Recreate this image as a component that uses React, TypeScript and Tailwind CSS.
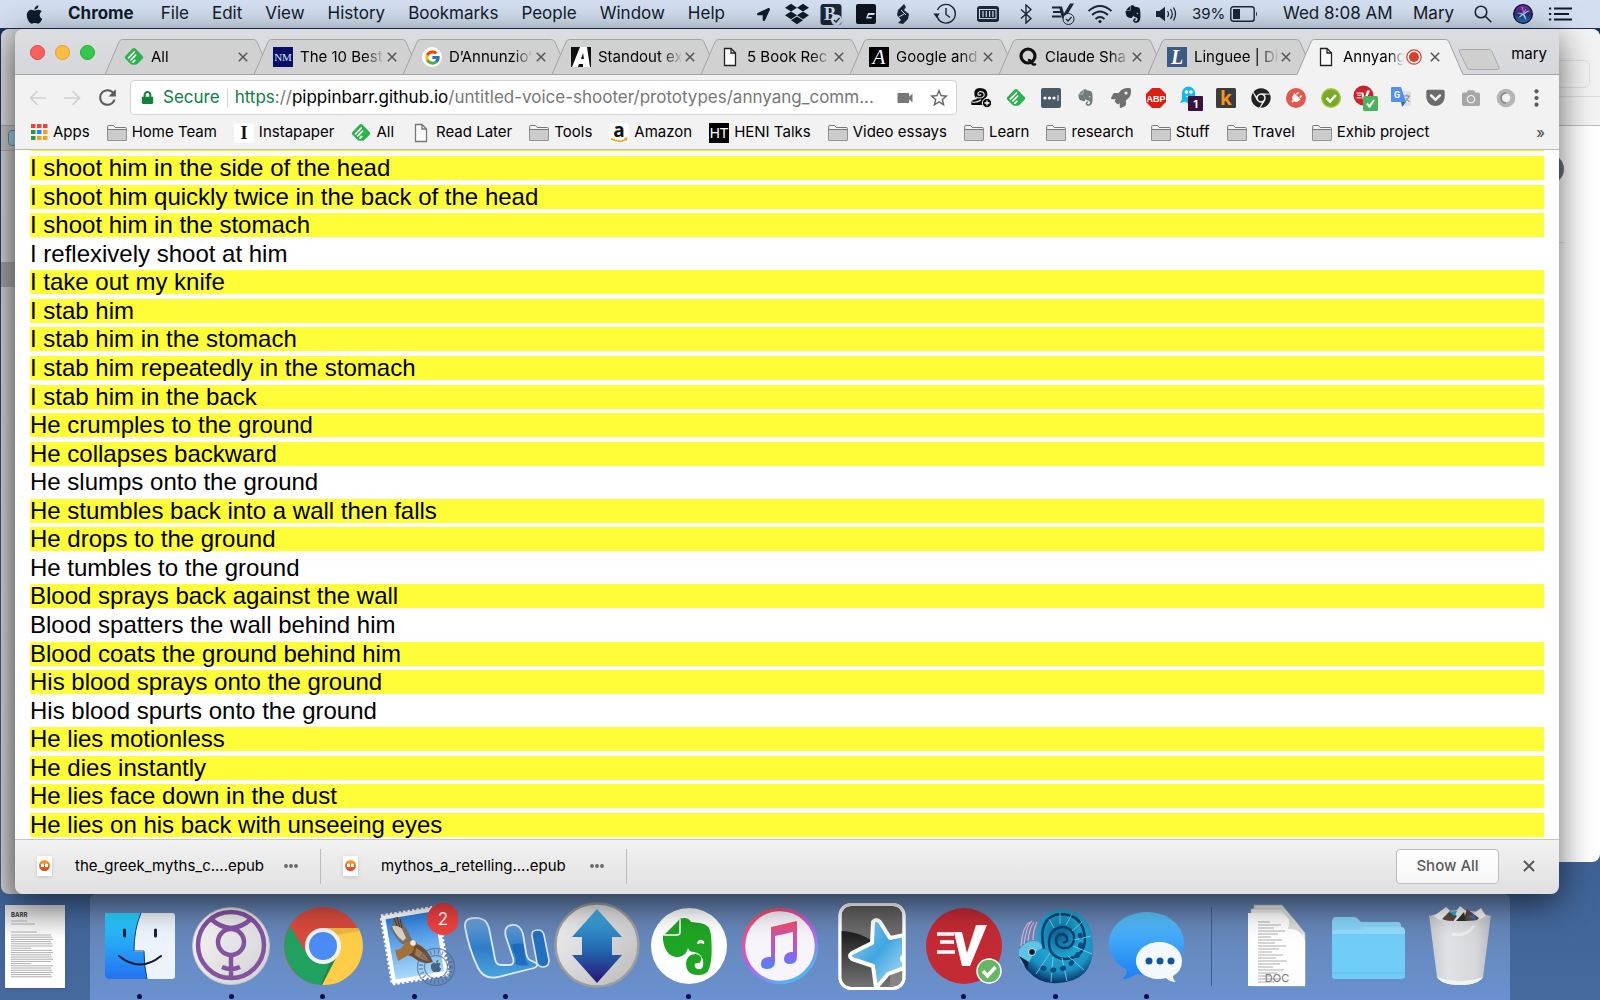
import React from "react";
import {
  FaApple,
  FaCamera,
  FaChrome,
  FaDropbox,
  FaEvernote,
  FaGetPocket,
  FaLocationArrow,
  FaLock,
  FaPlug,
  FaRocket,
} from "react-icons/fa";
import { FcGoogle } from "react-icons/fc";
import { MdVideocam, MdRefresh, MdStarBorder } from "react-icons/md";

/* ---------- small shared icons ---------- */

function Feedly({ size = 20 }: { size?: number }) {
  return (
    <svg width={size} height={size} viewBox="0 0 20 20">
      <path d="M8.6 1.6a2 2 0 0 1 2.8 0l7.2 7.3a2 2 0 0 1 0 2.8L13.4 17a2.500 2.500 0 0 1-1.800.8H8.400a2.500 2.500 0 0 1-1.800-.8L1.400 11.700a2 2 0 0 1 0-2.800z" fill="#2bb24c" />
      <path d="M4.500 10.800l5.800-5.800M6.800 13l4.800-4.800M9 15.200l1.800-1.800" stroke="#fff" strokeWidth="1.700" strokeLinecap="round" fill="none" />
    </svg>
  );
}

function PageIcon({ stroke = "#222" }: { stroke?: string }) {
  return (
    <svg width="20" height="20" viewBox="0 0 20 20">
      <path d="M4.500 1.500h6.500l4.500 4.500v12.500h-11z" fill="#fafafa" stroke={stroke} strokeWidth="1.300" />
      <path d="M11 1.500v4.500h4.500" fill="none" stroke={stroke} strokeWidth="1.300" />
    </svg>
  );
}

function FolderIcon() {
  return (
    <svg width="20" height="18" viewBox="0 0 20 18">
      <path d="M.7 16.300V2.200q0-.7.7-.7h5.200l1.600 2h10.400q.7 0 .7.7v12.100z" fill="#f4f4f4" stroke="#77777a" strokeWidth="1" />
      <path d="M1.200 5.700h17.600v10.100H1.200z" fill="#cbcbcc" />
      <path d="M.7 5.500h18.600" stroke="#77777a" strokeWidth="1" />
    </svg>
  );
}

function AppsIcon() {
  const colors = ["#e8453c", "#e8453c", "#e8453c", "#2a9a4a", "#1e88f7", "#f9a01b", "#2a9a4a", "#f9a01b", "#f9a01b"];
  return (
    <svg width="17" height="17" viewBox="0 0 17 17">
      {colors.map((c, i) => (
        <rect key={i} x={(i % 3) * 6} y={Math.floor(i / 3) * 6} width="4.500" height="4" fill={c} />
      ))}
    </svg>
  );
}

function LetterIcon({ text, bg, fg, size, font = "Liberation Serif", weight = "400", style = "normal" }: { text: string; bg: string; fg: string; size: number; font?: string; weight?: string; style?: string }) {
  return (
    <svg width="20" height="20" viewBox="0 0 20 20">
      <rect width="20" height="20" rx={bg === "#ffffff" ? 2 : 0} fill={bg} />
      <text x="10" y={10 + size * 0.34} textAnchor="middle" fontSize={size} fontFamily={font} fontWeight={weight} fontStyle={style} fill={fg}>{text}</text>
    </svg>
  );
}

function AmazonIcon() {
  return (
    <svg width="20" height="20" viewBox="0 0 20 20">
      <rect width="20" height="20" rx="2" fill="#fff" />
      <text x="10" y="14" textAnchor="middle" fontSize="19" fontWeight="700" fontFamily="Open Sans" fill="#111">a</text>
      <path d="M2 15.500q8 5 15 .8" fill="none" stroke="#f79a1c" strokeWidth="1.500" />
      <path d="M15 15.300l3-.2-.8 2.700" fill="none" stroke="#f79a1c" strokeWidth="1.100" />
    </svg>
  );
}

function CloseIcon({ size = 10, width = 1.5 }: { size?: number; width?: number }) {
  return (
    <svg width={size} height={size} viewBox="0 0 10 10">
      <path d="M.8.8l8.400 8.400M9.200.8L.8 9.200" stroke="#555" strokeWidth={width} />
    </svg>
  );
}

function ExpressV({ color = "#fff" }: { color?: string }) {
  return (
    <g fill="none" stroke={color}>
      <path d="M13 26h17M16 34h14M13 44h18" strokeWidth="3.500" />
      <path d="M30 24h8l5 21 9-28h11L46 58h-8z" fill={color} stroke="none" />
    </g>
  );
}

/* ---------- menu bar ---------- */

const statusIcons: { name: string; width: string; icon: React.ReactNode }[] = [
  { name: "Location", width: "w-[34px]", icon: <FaLocationArrow size={13} /> },
  { name: "Dropbox", width: "w-[34px]", icon: <FaDropbox size={24} /> },
  {
    name: "Backup", width: "w-[34px]", icon: (
      <svg width="23" height="23" viewBox="0 0 23 23">
        <rect x=".5" y="1" width="21" height="21" rx="3" fill="#1c2738" />
        <text x="10" y="17" textAnchor="middle" fontSize="18" fontWeight="700" fontFamily="Liberation Serif" fill="#d3dff0">B</text>
        <circle cx="16.500" cy="17" r="5.500" fill="#d3dff0" />
        <path d="M14 17l2 2 3.500-4" fill="none" stroke="#1c2738" strokeWidth="1.300" />
      </svg>
    ),
  },
  {
    name: "Monitor", width: "w-[36px]", icon: (
      <svg width="20" height="20" viewBox="0 0 20 20">
        <rect width="20" height="20" rx="2" fill="#0d1420" />
        <path d="M2 14.500h8l2-5.500h7l-1 2h-5l-1 2h4l-.6 1.500z" fill="#dfe8f4" />
      </svg>
    ),
  },
  {
    name: "Scrivener", width: "w-[38px]", icon: (
      <svg width="16" height="22" viewBox="0 0 16 22">
        <path d="M9 1l2 3-2 3 5 4-1 5-5 5-5-1 3-3-4-5 1-5z" fill="#1c2738" />
        <path d="M6 7l5 5M4 14l5-3" stroke="#d3dff0" strokeWidth="1" />
      </svg>
    ),
  },
  {
    name: "Time Machine", width: "w-[46px]", icon: (
      <svg width="24" height="22" viewBox="0 0 24 22" fill="none" stroke="#1c2738" strokeWidth="1.400">
        <path d="M4 13A9.300 9.300 0 1 0 4.500 7" />
        <path d="M13 5v6.500l4 3" />
        <path d="M.3 10.500h6.400l-3 4.500z" fill="#1c2738" stroke="none" />
      </svg>
    ),
  },
  {
    name: "Memory", width: "w-[40px]", icon: (
      <svg width="24" height="18" viewBox="0 0 24 18">
        <rect x="1" y="1" width="22" height="16" rx="3" fill="#1c2738" />
        <path d="M3.500 4.500h16.500v9H3.500z" fill="none" stroke="#d3dff0" strokeWidth="1.100" />
        <path d="M7 6v6M10.300 6v6M13.600 6v6M16.900 6v6" stroke="#d3dff0" strokeWidth="1.200" />
      </svg>
    ),
  },
  {
    name: "Bluetooth", width: "w-[36px]", icon: (
      <svg width="14" height="20" viewBox="0 0 14 20" fill="none" stroke="#1c2738" strokeWidth="1.400">
        <path d="M2 5.500l10 9-5 4.500V1l5 4.500-10 9" />
      </svg>
    ),
  },
  {
    name: "VPN", width: "w-[38px]", icon: (
      <svg width="25" height="24" viewBox="0 0 25 24">
        <path d="M1 5.500h8M2 10h8M1 14.500h9" stroke="#1c2738" strokeWidth="2.200" />
        <path d="M8 4.500h3l2 7 6-10h4l-9 15h-3z" fill="#1c2738" />
        <circle cx="17.500" cy="17" r="5.500" fill="#d3dff0" stroke="#1c2738" />
        <path d="M15 17l2 2 3.500-4" fill="none" stroke="#1c2738" strokeWidth="1.200" />
      </svg>
    ),
  },
  {
    name: "Wi-Fi", width: "w-[36px]", icon: (
      <svg width="26" height="20" viewBox="0 0 26 20" fill="none" stroke="#1c2738" strokeWidth="1.700">
        <path d="M1.500 7q11.500-10 23 0M5 11q8-7 16 0M8.500 15q4.500-4 9 0" />
        <circle cx="13" cy="17.500" r="1.600" fill="#1c2738" stroke="none" />
      </svg>
    ),
  },
  { name: "Evernote", width: "w-[30px]", icon: <FaEvernote size={20} /> },
  {
    name: "Volume", width: "w-[36px]", icon: (
      <svg width="22" height="16" viewBox="0 0 22 16">
        <path d="M1 5h3.500L10 .8v14.400L4.500 11H1z" fill="#1c2738" />
        <path d="M12.500 5q2 3 0 6M15.500 3q3.500 5 0 10M18.500 1.500q4 6.500 0 13" fill="none" stroke="#1c2738" strokeWidth="1.300" />
      </svg>
    ),
  },
];

function MenuBar() {
  return (
    <header className="flex h-7 shrink-0 items-center bg-[#d3dff0] text-[17px] text-[#111b2b]">
      <button aria-label="Apple" className="ml-6 mr-6 w-5"><FaApple size={21} /></button>
      <nav className="flex flex-1 items-center gap-[23px]">
        <button className="mr-1 font-bold">Chrome</button>
        {["File", "Edit", "View", "History", "Bookmarks", "People", "Window", "Help"].map((m) => (
          <button key={m}>{m}</button>
        ))}
      </nav>
      <div className="flex items-center">
        {statusIcons.map((s) => (
          <button key={s.name} aria-label={s.name} className={`flex h-7 items-center justify-center ${s.width}`}>{s.icon}</button>
        ))}
      </div>
      <div className="ml-2 flex items-center">
        <span className="w-[38px] text-[15px]">39%</span>
        <svg width="29" height="16" viewBox="0 0 29 16">
          <rect x=".8" y=".8" width="23.400" height="14.400" rx="2.500" fill="none" stroke="#1c2738" strokeWidth="1.400" />
          <rect x="3" y="3" width="7" height="10" fill="#1c2738" />
          <path d="M26 5.500q2 2.500 0 5z" fill="#1c2738" />
        </svg>
      </div>
      <span className="ml-6 w-[110px] whitespace-nowrap">Wed 8:08 AM</span>
      <span className="ml-5 w-10">Mary</span>
      <button aria-label="Search" className="ml-4 flex w-[28px] justify-center">
        <svg width="18" height="18" viewBox="0 0 18 18" fill="none" stroke="#1c2738" strokeWidth="1.600">
          <circle cx="7" cy="7" r="5.800" /><path d="M11.300 11.300l6 6" />
        </svg>
      </button>
      <button aria-label="Siri" className="ml-4 w-5">
        <svg width="20" height="20" viewBox="0 0 20 20">
          <defs>
            <linearGradient id="siri" x1="0" y1="0" x2="0" y2="1">
              <stop offset="0" stopColor="#7a2bb0" /><stop offset=".5" stopColor="#30286a" /><stop offset="1" stopColor="#1b79c9" />
            </linearGradient>
          </defs>
          <circle cx="10" cy="10" r="10" fill="#0c0e2b" />
          <circle cx="10" cy="10" r="8.800" fill="url(#siri)" />
          <path d="M3 9q5-1 7 1 3-4 7-3-4 1-5.500 3.500 2 3 1.500 5.500-2-2-3-5-3 3-5 3 2-2 3.500-4z" fill="#7fdcf0" />
          <path d="M9 3q2 4 1 7l3-5" stroke="#f46ec0" fill="none" />
        </svg>
      </button>
      <button aria-label="Notifications" className="ml-4 mr-7 w-[23px]">
        <svg width="23" height="14" viewBox="0 0 23 14" stroke="#111b2b" strokeWidth="2.200">
          <path d="M5 1.500h18M5 7h15M5 12.500h18" /><path d="M0 1.500h2.200M0 7h2.200M0 12.500h2.200" />
        </svg>
      </button>
    </header>
  );
}

/* ---------- tabs ---------- */

const tabs: { title: string; icon: React.ReactNode }[] = [
  { title: "All", icon: <Feedly /> },
  { title: "The 10 Best", icon: <LetterIcon text="NM" bg="#06106b" fg="#dfe3ff" size={11} /> },
  { title: "D’Annunzio’", icon: <span className="flex size-5 items-center justify-center rounded-full bg-white"><FcGoogle size={17} /></span> },
  {
    title: "Standout ex", icon: (
      <svg width="20" height="20" viewBox="0 0 20 20">
        <rect width="20" height="20" fill="#111" />
        <path d="M1 20L9 0h7l3 20h-7v-3H8l-1 3zM10 12h3l-1-6z" fill="#fff" fillRule="evenodd" />
      </svg>
    ),
  },
  { title: "5 Book Rec", icon: <PageIcon /> },
  { title: "Google and", icon: <LetterIcon text="A" bg="#000000" fg="#fff" size={21} style="italic" /> },
  {
    title: "Claude Sha", icon: (
      <svg width="20" height="20" viewBox="0 0 20 20" fill="none" stroke="#111" strokeWidth="3.200">
        <circle cx="10" cy="9" r="7" /><path d="M10 13q3 0 4 3 1 2.500 4 1" strokeWidth="2.500" />
      </svg>
    ),
  },
  { title: "Linguee | Di", icon: <LetterIcon text="L" bg="#3c5a86" fg="#fff" size={20} style="italic" weight="700" /> },
  { title: "Annyang", icon: <PageIcon /> },
];

function Tab({ title, icon, active }: { title: string; icon: React.ReactNode; active: boolean }) {
  return (
    <div className={active ? "relative z-10 -mr-[17px] h-9 w-[166px]" : "relative -mr-[17px] h-9 w-[166px]"}>
      <svg className="absolute inset-0" width="166" height="36" viewBox="0 0 166 36">
        <path d="M0 36L14 3q1-2.500 3.500-2.500h131q2.500 0 3.500 2.500l14 33z" fill={active ? "#f2f2f2" : "#d1d1d1"} />
        <path d="M0 35.500L14 3q1-2.500 3.500-2.500h131q2.500 0 3.500 2.500l14 32.500" fill="none" stroke="#a3a3a5" />
        {!active && <path d="M0 35.500h166" stroke="#a3a3a5" />}
      </svg>
      <div className="relative flex h-full items-center pl-[19px] pr-[23px]">
        {icon}
        <button className="ml-[7px] mr-0.5 flex-1 overflow-hidden whitespace-nowrap text-left mask-r-from-75%">{title}</button>
        {active && (
          <svg width="16" height="16" viewBox="0 0 16 16" className="mr-2">
            <circle cx="8" cy="8" r="7.200" fill="none" stroke="#d6402f" strokeWidth="1.200" /><circle cx="8" cy="8" r="5" fill="#d6402f" />
          </svg>
        )}
        <button aria-label={`Close ${title}`}><CloseIcon /></button>
      </div>
    </div>
  );
}

function TabStrip() {
  return (
    <div className="relative flex h-[46px] items-end bg-linear-to-b from-[#dcdde0] to-[#d6d7da] text-[15px]">
      <div className="absolute inset-x-0 bottom-0 h-px bg-[#a3a3a5]" />
      <div className="mb-[15px] ml-[15px] mr-[10px] flex gap-[10px]">
        <button aria-label="Close window" className="size-[15px] rounded-full border border-[#e0443e] bg-[#fc605b]" />
        <button aria-label="Minimise window" className="size-[15px] rounded-full border border-[#dfa023] bg-[#fdbc40]" />
        <button aria-label="Zoom window" className="size-[15px] rounded-full border border-[#1dad2b] bg-[#34c84a]" />
      </div>
      {tabs.map((t, i) => <Tab key={t.title} {...t} active={i === tabs.length - 1} />)}
      <button aria-label="New tab" className="mb-[5px] ml-3">
        <svg width="42" height="21" viewBox="0 0 42 21"><path d="M3 .5h28q2 0 3 2l7 16q.5 2-1.500 2H12q-2 0-3-2L1.500 3Q1 .5 3 .5z" fill="#cfcfcf" stroke="#a9a9ab" /></svg>
      </button>
      <button className="mb-2.5 ml-auto mr-3">mary</button>
    </div>
  );
}

/* ---------- toolbar ---------- */

const extensions: { name: string; icon: React.ReactNode }[] = [
  {
    name: "Add contact", icon: (
      <svg width="22" height="22" viewBox="0 0 22 22">
        <path d="M4.500 8.500Q3 1 10 1t7.500 6q0 3-3.500 5 3.500 1 3.500 6H1.500q-1-3 1-4.500T8 12q-3-1-3.500-3.500z" fill="#0b0b0b" />
        <path d="M6 10q5 2.500 8-1 1-4-3.500-4.500-3 .5-2.500 3 1.500 1.500 3 0M2 15q5 1 9-2" fill="none" stroke="#f2f2f2" strokeWidth="1.100" />
        <circle cx="17" cy="16" r="4.700" fill="#0b0b0b" stroke="#f2f2f2" /><path d="M17 13.500v5M14.500 16h5" stroke="#fff" strokeWidth="1.300" />
      </svg>
    ),
  },
  { name: "Feedly", icon: <Feedly /> },
  {
    name: "Passwords", icon: (
      <svg width="20" height="20" viewBox="0 0 20 20"><rect width="20" height="20" rx="2" fill="#4a5a67" /><circle cx="4" cy="10" r="1.600" fill="#fff" /><circle cx="8.500" cy="10" r="1.600" fill="#fff" /><circle cx="13" cy="10" r="1.600" fill="#fff" /><path d="M17 7v6" stroke="#fff" /></svg>
    ),
  },
  { name: "Evernote clipper", icon: <FaEvernote size={19} color="#6d7c7c" /> },
  { name: "Rocket", icon: <FaRocket size={20} color="#6f6f6f" /> },
  {
    name: "Adblock Plus", icon: (
      <svg width="20" height="20" viewBox="0 0 20 20"><path d="M6 0h8l6 6v8l-6 6H6l-6-6V6z" fill="#dc1d12" /><text x="10" y="13.500" fontSize="9" fontWeight="700" fontFamily="Liberation Sans" textAnchor="middle" fill="#fff">ABP</text></svg>
    ),
  },
  {
    name: "Ghostery", icon: (
      <svg width="24" height="26" viewBox="0 0 24 26">
        <path d="M1 18l2-4V8a6.500 6.500 0 0 1 13 0v10l-3-1.500-4 2-3-2z" fill="#17b6ee" />
        <circle cx="7.500" cy="7" r="1.800" fill="#fff" /><circle cx="12" cy="7" r="1.800" fill="#fff" /><path d="M7 11q3 3 6 0" stroke="#fff" fill="none" />
        <rect x="9" y="11" width="15" height="15" rx="1" fill="#3c1240" />
        <text x="16.500" y="22.500" fontSize="11" fontWeight="700" fontFamily="Inter" textAnchor="middle" fill="#fff">1</text>
      </svg>
    ),
  },
  {
    name: "Kindle", icon: (
      <svg width="20" height="20" viewBox="0 0 20 20"><rect width="20" height="20" rx="1.500" fill="#3b3b3b" /><text x="10" y="17" fontSize="19" fontWeight="700" fontFamily="Open Sans" textAnchor="middle" fill="#f7941d">k</text></svg>
    ),
  },
  { name: "Chrome", icon: <FaChrome size={20} color="#222" /> },
  { name: "Plug", icon: <span className="flex size-5 items-center justify-center rounded-full bg-[#e0584a]"><FaPlug size={12} color="#fff" className="rotate-45" /></span> },
  {
    name: "Verified", icon: (
      <svg width="20" height="20" viewBox="0 0 20 20"><circle cx="10" cy="10" r="9.300" fill="#79a927" stroke="#9ccc3c" strokeWidth="1.400" /><path d="M5.500 10l3.500 3.500 6-6.500" fill="none" stroke="#fff" strokeWidth="2.500" /></svg>
    ),
  },
  {
    name: "ExpressVPN", icon: (
      <svg width="25" height="26" viewBox="0 0 25 26">
        <circle cx="10.500" cy="10.500" r="10" fill="#c9252f" />
        <g transform="translate(0 1) scale(.27)"><ExpressV /></g>
        <rect x="10" y="11" width="15" height="15" rx="1.500" fill="#4bb35a" /><path d="M14 18.500l2.500 3 4.500-6.500" fill="none" stroke="#fff" strokeWidth="2" />
      </svg>
    ),
  },
  {
    name: "Translate", icon: (
      <svg width="20" height="21" viewBox="0 0 20 21">
        <path d="M9 4h10q1 0 1 1v13q0 1-1 1h-7z" fill="#dfe1e4" /><path d="M1 0h9l5 15H1q-1 0-1-1V1q0-1 1-1z" fill="#5190f0" />
        <path d="M10 15h5l-4 5z" fill="#3a66c4" />
        <text x="6" y="10.500" fontSize="9" fontWeight="700" fontFamily="Roboto" textAnchor="middle" fill="#fff">G</text>
        <path d="M13 9h6M16 7.500V9M18 9q-1 4-4 5M14.500 11l4 4" stroke="#70889c" fill="none" />
      </svg>
    ),
  },
  { name: "Pocket", icon: <FaGetPocket size={21} color="#6b6b6b" /> },
  { name: "Screenshot", icon: <FaCamera size={18} color="#a7a7a7" /> },
  {
    name: "Ring", icon: (
      <svg width="20" height="20" viewBox="0 0 20 20">
        <circle cx="10" cy="10" r="6.800" fill="#f2f2f2" stroke="#b5b5b5" strokeWidth="5" /><path d="M10 5a5 5 0 0 0 0 10" fill="none" stroke="#8c8c8c" strokeWidth="2" />
      </svg>
    ),
  },
];

function Arrow({ flip }: { flip?: boolean }) {
  return (
    <svg width="17" height="16" viewBox="0 0 17 16" className={flip ? "rotate-180" : ""}>
      <path d="M17 8H1.500M8.500 1L1.500 8l7 7" fill="none" stroke="#cfcfcf" strokeWidth="1.700" />
    </svg>
  );
}

function Toolbar() {
  return (
    <div className="flex h-[45px] items-center bg-[#f2f2f2]">
      <button aria-label="Back" className="ml-[14px]"><Arrow /></button>
      <button aria-label="Forward" className="ml-[18px]"><Arrow flip /></button>
      <button aria-label="Reload" className="ml-[14px] mr-[10px]"><MdRefresh size={25} color="#5a5a5a" /></button>
      <div className="flex h-[35px] flex-1 items-center rounded border border-[#d2d2d2] bg-white pl-[10px] pr-[6px] text-[17px]">
        <FaLock size={13} color="#12813a" />
        <span className="ml-[9px] text-[#0b8043]">Secure</span>
        <span className="mx-[7px] h-5 w-px bg-[#d5d5d5]" />
        <div role="textbox" aria-label="Address" tabIndex={0} className="flex-1 whitespace-nowrap text-[#777]">
          <span className="text-[#0b8043]">https</span>://<span className="text-black">pippinbarr.github.io</span>/untitled-voice-shooter/prototypes/annyang_comm...
        </div>
        <MdVideocam size={20} color="#777" />
        <button aria-label="Bookmark" className="ml-[13px]"><MdStarBorder size={22} color="#666" /></button>
      </div>
      <div className="ml-1.5 flex">
        {extensions.map((e) => (
          <button key={e.name} aria-label={e.name} className="flex h-7 w-[35px] items-center justify-center">{e.icon}</button>
        ))}
      </div>
      <button aria-label="Menu" className="ml-[11px] mr-5">
        <svg width="5" height="18" viewBox="0 0 5 18" fill="#5a5a5a"><circle cx="2.500" cy="2.300" r="2.100" /><circle cx="2.500" cy="9" r="2.100" /><circle cx="2.500" cy="15.700" r="2.100" /></svg>
      </button>
    </div>
  );
}

const bookmarks: { title: string; icon: React.ReactNode }[] = [
  { title: "Apps", icon: <AppsIcon /> },
  { title: "Home Team", icon: <FolderIcon /> },
  { title: "Instapaper", icon: <LetterIcon text="I" bg="#ffffff" fg="#111" size={18} weight="700" /> },
  { title: "All", icon: <Feedly /> },
  { title: "Read Later", icon: <PageIcon stroke="#777" /> },
  { title: "Tools", icon: <FolderIcon /> },
  { title: "Amazon", icon: <AmazonIcon /> },
  { title: "HENI Talks", icon: <LetterIcon text="HT" bg="#000000" fg="#fff" size={14} font="Liberation Sans" /> },
  { title: "Video essays", icon: <FolderIcon /> },
  { title: "Learn", icon: <FolderIcon /> },
  { title: "research", icon: <FolderIcon /> },
  { title: "Stuff", icon: <FolderIcon /> },
  { title: "Travel", icon: <FolderIcon /> },
  { title: "Exhib project", icon: <FolderIcon /> },
];

function BookmarksBar() {
  return (
    <nav className="flex h-[30px] items-center gap-[17px] border-b border-[#b9b9b9] bg-[#f2f2f2] pb-1 pl-4 pr-[14px] text-[15px]">
      {bookmarks.map((b, i) => (
        <a key={i} href="#" className="flex items-center gap-[5px] whitespace-nowrap">{b.icon}{b.title}</a>
      ))}
      <button aria-label="More bookmarks" className="ml-auto text-[15px] leading-5 text-[#444]">»</button>
    </nav>
  );
}

/* ---------- page ---------- */

const lines: [string, boolean][] = [
  ["I shoot him in the side of the head", true],
  ["I shoot him quickly twice in the back of the head", true],
  ["I shoot him in the stomach", true],
  ["I reflexively shoot at him", false],
  ["I take out my knife", true],
  ["I stab him", true],
  ["I stab him in the stomach", true],
  ["I stab him repeatedly in the stomach", true],
  ["I stab him in the back", true],
  ["He crumples to the ground", true],
  ["He collapses backward", true],
  ["He slumps onto the ground", false],
  ["He stumbles back into a wall then falls", true],
  ["He drops to the ground", true],
  ["He tumbles to the ground", false],
  ["Blood sprays back against the wall", true],
  ["Blood spatters the wall behind him", false],
  ["Blood coats the ground behind him", true],
  ["His blood sprays onto the ground", true],
  ["His blood spurts onto the ground", false],
  ["He lies motionless", true],
  ["He dies instantly", true],
  ["He lies face down in the dust", true],
  ["He lies on his back with unseeing eyes", true],
];

function Page() {
  return (
    <div className="flex flex-1 flex-col bg-white px-[15px] pb-0.5 font-['Liberation_Sans',Arial,sans-serif] text-2xl text-black">
      <div className="mb-[5px] h-px bg-[#ffff00]" />
      <div className="flex flex-1 flex-col justify-between">
        {lines.map(([text, said]) => (
          <p key={text} className={said ? "h-6 bg-[#fffc38] leading-6" : "h-6 leading-6"}>{text}</p>
        ))}
      </div>
    </div>
  );
}

function Download({ name }: { name: string }) {
  return (
    <div className="flex h-[35px] w-[306px] items-center border-r border-[#bcbcbc] pl-[22px] pr-[22px]">
      <svg width="15" height="20" viewBox="0 0 15 20" className="drop-shadow">
        <defs><linearGradient id="book" x1="0" y1="0" x2="0" y2="1"><stop offset="0" stopColor="#f6a52c" /><stop offset="1" stopColor="#d9401a" /></linearGradient></defs>
        <rect width="15" height="20" fill="#fff" /><circle cx="7.500" cy="9.500" r="5.500" fill="url(#book)" />
        <path d="M4 8q2-1 3.500 0 1.500-1 3.500 0v3H4z" fill="#fff" /><path d="M7.500 8v3" stroke="#e8641b" />
      </svg>
      <button className="ml-[23px] whitespace-nowrap">{name}</button>
      <button aria-label={`Options for ${name}`} className="ml-auto">
        <svg width="14" height="4" viewBox="0 0 14 4" fill="#666"><circle cx="2" cy="2" r="1.900" /><circle cx="7" cy="2" r="1.900" /><circle cx="12" cy="2" r="1.900" /></svg>
      </button>
    </div>
  );
}

function DownloadsBar() {
  return (
    <div className="flex h-[55px] items-center border-t border-[#c6c6c6] bg-linear-to-b from-[#f2f2f2] to-[#e0e0e0] pb-0.5 text-[15px] text-black">
      <Download name="the_greek_myths_c....epub" />
      <Download name="mythos_a_retelling....epub" />
      <button className="ml-auto h-[35px] w-[103px] rounded border border-[#bdbdbd] bg-linear-to-b from-white to-[#f6f6f6] font-medium text-[#5a5a5a]">Show All</button>
      <button aria-label="Close downloads" className="ml-6 mr-6"><CloseIcon size={12} width={1.6} /></button>
    </div>
  );
}

/* ---------- dock ---------- */

const dockApps: { name: string; running: boolean; icon: React.ReactNode }[] = [
  {
    name: "Finder", running: true, icon: (
      <svg width="84" height="88" viewBox="0 0 84 88">
        <defs><linearGradient id="fi" x1="0" y1="0" x2="0" y2="1"><stop offset="0" stopColor="#2ad2fd" /><stop offset="1" stopColor="#2372f1" /></linearGradient></defs>
        <rect x="7" y="11" width="70" height="66" rx="3" fill="#edf3fa" />
        <path d="M43 11H10q-3 0-3 3v60q0 3 3 3h39q-2-12-3-27H36q0-23 7-39z" fill="url(#fi)" />
        <path d="M43 11Q36 27 36 49h10q0 15 3 28" fill="none" stroke="#16417c" strokeWidth="1" />
        <path d="M26.500 28v6M57.500 28v6" stroke="#152238" strokeWidth="3" strokeLinecap="round" />
        <path d="M21 54q21 17 42 0" fill="none" stroke="#111c2e" strokeWidth="2" strokeLinecap="round" />
      </svg>
    ),
  },
  {
    name: "Mercury", running: true, icon: (
      <svg width="84" height="88" viewBox="0 0 84 88">
        <defs><linearGradient id="mc" x1="0" y1="0" x2="1" y2="1"><stop offset="0" stopColor="#fafafa" /><stop offset="1" stopColor="#cfcfd2" /></linearGradient></defs>
        <circle cx="42" cy="44" r="38.500" fill="url(#mc)" stroke="#c6c6cb" strokeWidth="1" />
        <g fill="none" stroke="#8453a0">
          <circle cx="42" cy="43" r="33" strokeWidth="4.500" />
          <circle cx="42" cy="40" r="13" strokeWidth="4.500" />
          <path d="M22 17q20 18 40 0M42 53v22M33 65q9 4 18 0" strokeWidth="4.500" />
        </g>
      </svg>
    ),
  },
  {
    name: "Chrome", running: true, icon: (
      <svg width="84" height="88" viewBox="0 0 84 88">
        <circle cx="42" cy="44" r="39" fill="#db4a3e" />
        <path d="M9 24A39 39 0 0 0 41 83L56 54 42 44 26 52z" fill="#21a15f" />
        <path d="M41 83A39 39 0 0 0 77.500 26H42l14 28z" fill="#fecd47" />
        <path d="M42 26h35.500l.9 3L55 33z" fill="#d9a636" opacity=".5" /><path d="M56 54L41 83l-1.500-.2L50 58z" fill="#176f41" opacity=".5" />
        <circle cx="42" cy="44" r="18" fill="#f3f3f3" /><circle cx="42" cy="44" r="14" fill="#4a8bf4" />
      </svg>
    ),
  },
  {
    name: "Mail", running: true, icon: (
      <svg width="88" height="88" viewBox="-2 0 88 88">
        <defs><linearGradient id="ml" x1="0" y1="0" x2="0" y2="1"><stop offset="0" stopColor="#2c7fe0" /><stop offset="1" stopColor="#a9dafa" /></linearGradient></defs>
        <g transform="translate(9 14) rotate(-9.500)">
          <rect x="0" y="0" width="57" height="69" fill="#fff" stroke="#fff" strokeWidth="3" strokeDasharray="2.500 2" />
          <rect x="4" y="4" width="49" height="61" fill="url(#ml)" />
        </g>
        <path d="M41 40q3-2 4 2 10 3 16 18-9 3-16-2-5-4-9-5z" fill="#6f4c2e" />
        <path d="M44 46q8 4 13 13-8-1-14-6z" fill="#a07a52" />
        <path d="M19 27l3-11 3-1 3 2 2 2q3 6 7 12l3 7-3 5-7-1q-7-6-11-15z" fill="#7a7065" />
        <path d="M22 16l4 10M25 15l3 11M28 17l2 9" stroke="#40362c" strokeWidth="1" />
        <path d="M20 24q6-1 10 3l4 9-3 3Q23 33 20 24z" fill="#d8d2c6" />
        <path d="M33 41q4-4 9-1l3 2-3 3q0 6-7 9l-9 5-2-7-1-4q5 0 8-4z" fill="#a4713c" />
        <circle cx="41" cy="41" r="2.800" fill="#f2ead8" />
        <g fill="none" stroke="#4b6383" opacity=".65"><circle cx="64" cy="65" r="18.500" strokeWidth="1.300" /><circle cx="64" cy="65" r="11.500" strokeWidth="1.300" /><circle cx="64" cy="65" r="15" strokeWidth="4" strokeDasharray="1.500 2.500" /></g>
        <FaApple x={57} y={57} size={14} color="#4b6383" />
        <circle cx="71" cy="17" r="16" fill="#f04040" />
        <text x="71" y="23" fontSize="17" fontFamily="Inter" textAnchor="middle" fill="#fff">2</text>
      </svg>
    ),
  },
  {
    name: "Word", running: true, icon: (
      <svg width="90" height="88" viewBox="0 0 90 88">
        <defs><linearGradient id="wd" x1="0" y1="0" x2="0" y2="1"><stop offset="0" stopColor="#6ea3da" /><stop offset=".5" stopColor="#2f7dc6" /><stop offset="1" stopColor="#4ba5de" /></linearGradient></defs>
        <path d="M4 25Q3 16 13 16q12-1 15 10l6 31q1 6 6 6h8q6 0 4-7l-7-21q-3-11 6-12 8-1 11 9l3 18q1 8 6 9l4 2q3 3-2 5L37 75q-14 3-20-9Q8 47 4 25z" fill="url(#wd)" stroke="#dbe8f6" strokeWidth="1.800" />
        <path d="M71 34q-1-6 6-6 5 0 6 5l5 25q0 7-6 7-4 0-6-4z" fill="#2470c0" stroke="#dbe8f6" strokeWidth="1.600" />
        <path d="M50 43q6-3 12-1l2 12q1 7 4 9-8 2-14-1 2-3 0-9z" fill="#1560b8" opacity=".7" />
      </svg>
    ),
  },
  {
    name: "Transfer", running: false, icon: (
      <svg width="88" height="88" viewBox="0 0 88 88">
        <defs><linearGradient id="tr" x1="0" y1="0" x2="0" y2="1"><stop offset="0" stopColor="#44b4e8" /><stop offset=".55" stopColor="#2268ae" /><stop offset="1" stopColor="#2a1577" /></linearGradient>
          <linearGradient id="trb" x1="0" y1="0" x2="1" y2="1"><stop offset="0" stopColor="#f6f6f6" /><stop offset="1" stopColor="#b9b9b9" /></linearGradient></defs>
        <circle cx="44" cy="43" r="41.500" fill="url(#trb)" stroke="#9d9d9f" strokeWidth="2.500" />
        <path d="M44 7l25 28H59v18h10L44 81 19 53h10V35H19z" fill="url(#tr)" />
      </svg>
    ),
  },
  {
    name: "Evernote", running: true, icon: (
      <svg width="84" height="88" viewBox="0 0 84 88">
        <circle cx="42" cy="44" r="38" fill="#fff" />
        <path d="M16 34L31 19q1-3 6-3 5 0 7 4l9 1q10 1 11 12 2 24-2 34-2 6-11 6-12 0-12-12 1-9 10-9 6 1 5 6-1 4-5 3-2 1-1 4 2 3 6 2 3-2 2-9-2-7-9-8-5 0-6-4-1 5-6 8-7 3-13-2-5-5-6-14z" fill="#1fa524" />
        <path d="M17 33h13q3 0 3-3V17" fill="none" stroke="#fff" strokeWidth="1.500" />
        <path d="M50 42q1-5 5-4 3 1 2 4-3-1.500-7 0z" fill="#fff" />
      </svg>
    ),
  },
  {
    name: "iTunes", running: false, icon: (
      <svg width="84" height="88" viewBox="0 0 84 88">
        <defs>
          <linearGradient id="itr" x1=".2" y1="0" x2=".8" y2="1"><stop offset="0" stopColor="#fc4f57" /><stop offset=".5" stopColor="#c05bea" /><stop offset="1" stopColor="#3fc5f5" /></linearGradient>
          <linearGradient id="itn" x1="0" y1="0" x2="0" y2="1"><stop offset="0" stopColor="#f64f62" /><stop offset=".6" stopColor="#a45be8" /><stop offset="1" stopColor="#4a85f7" /></linearGradient>
        </defs>
        <circle cx="42" cy="44" r="36.500" fill="#f8f4fb" stroke="url(#itr)" strokeWidth="3.500" />
        <path d="M33 25l26-6v35q0 8-7 8-6 0-6-5 0-6 7-7h2V30l-18 4v25q0 8-8 8-6 0-6-5 0-6 7-7h3z" fill="url(#itn)" />
      </svg>
    ),
  },
  {
    name: "Anki", running: false, icon: (
      <svg width="84" height="88" viewBox="0 0 84 88">
        <defs><linearGradient id="ak" x1="0" y1="0" x2="0" y2="1"><stop offset="0" stopColor="#5c5c5c" /><stop offset="1" stopColor="#8a8a8a" /></linearGradient>
          <linearGradient id="akl" x1="0" y1="0" x2="0" y2="1"><stop offset="0" stopColor="#1c1c1c" /><stop offset="1" stopColor="#777" /></linearGradient>
          <linearGradient id="aks" x1="0" y1="0" x2="1" y2="1"><stop offset="0" stopColor="#9fd3f3" /><stop offset=".5" stopColor="#3fa6e2" /><stop offset="1" stopColor="#bfe3f7" /></linearGradient>
          <clipPath id="akc"><rect x="11" y="3" width="62" height="82" rx="10" /></clipPath></defs>
        <rect x="10" y="2.500" width="64" height="84" rx="11" fill="url(#ak)" stroke="#fff" strokeWidth="3" />
        <g clipPath="url(#akc)">
          <path d="M10 29q26 0 50 24v34H10z" fill="url(#akl)" />
          <path d="M43 20q3-4 7 0l10 16 14-3v20q-4 4 0 7v6L58 72 46 86l-3-22-21-7q-4-3 0-6l20-10z" fill="url(#aks)" stroke="#fff" strokeWidth="4" strokeLinejoin="round" />
        </g>
        <rect x="10" y="2.500" width="64" height="84" rx="11" fill="none" stroke="#fff" strokeWidth="3" />
      </svg>
    ),
  },
  {
    name: "ExpressVPN", running: true, icon: (
      <svg width="84" height="88" viewBox="0 0 84 88">
        <circle cx="42" cy="44" r="38" fill="#c32a34" />
        <g transform="translate(2 6)"><ExpressV /></g>
        <circle cx="67" cy="69" r="12" fill="#65b765" stroke="#fff" strokeWidth="1.500" /><path d="M61 69l4.500 5 8-9" fill="none" stroke="#fff" strokeWidth="3.500" />
      </svg>
    ),
  },
  {
    name: "Nautilus", running: true, icon: (
      <svg width="84" height="88" viewBox="0 0 84 88">
        <defs><radialGradient id="na" cx=".55" cy=".35" r=".65"><stop offset="0" stopColor="#0a5f94" /><stop offset=".45" stopColor="#1fa3cf" /><stop offset=".75" stopColor="#1c8fc4" /><stop offset="1" stopColor="#073463" /></radialGradient></defs>
        <path d="M25 44Q19 10 49 7q31 2 31 38 0 34-35 36-18 2-31-13L6 56l2-9 4-8z" fill="url(#na)" />
        <path d="M8 44q2-22 10-24M11 42q3-20 8-23M15 39q1-12 6-19M20 38q0-10 4-18" fill="none" stroke="#e7b0d4" strokeWidth="1.200" />
        <path d="M6 48q8-12 20-8l4 6q-10 2-16 20Q4 60 6 48z" fill="#5cc4e4" /><path d="M6 54l10 6-2 8z" fill="#0b2244" />
        <circle cx="19" cy="50" r="3.500" fill="#071a33" stroke="#d7ecf5" />
        <path d="M31 47Q24 15 47 12q24 0 25 26-1 18-20 19-16-1-16-17 1-14 14-15 12 2 11 13-2 9-11 8-7-1-7-8 1-6 7-6 5 2 4 7l-4 2" fill="none" stroke="#07426f" strokeWidth="2.500" />
        <path d="M36 17l5 9M47 10v12M59 12l-6 11M69 20l-10 9M78 34l-17 4M79 52l-19-8M71 68L55 54M54 79l-5-23M38 80l2-25M23 72l14-21" stroke="#77dbef" strokeWidth="1" opacity=".8" />
        <path d="M30 66q20 7 33-10 7-12 4-24" fill="none" stroke="#0a4a7c" strokeWidth="5" strokeLinecap="round" strokeDasharray="1 9" />
      </svg>
    ),
  },
  {
    name: "Messages", running: true, icon: (
      <svg width="84" height="88" viewBox="0 0 84 88">
        <defs><linearGradient id="ms" x1="0" y1="0" x2="0" y2="1"><stop offset="0" stopColor="#5cc3fa" /><stop offset="1" stopColor="#1a7ff5" /></linearGradient></defs>
        <path d="M42 10c21 0 37 14 37 31S63 73 42 73q-6 0-11-1-6 5-14 5 5-4 5-9Q4 58 4 41C4 24 21 10 42 10z" fill="url(#ms)" />
        <path d="M54 40c13 0 23 8 23 19q0 10-9 15 0 4 3 6-6 0-10-4-3 1-7 1c-13 0-23-8-23-18s10-19 23-19z" fill="#f3f8fb" />
        <g fill="#0f56a5"><circle cx="44" cy="59" r="3.500" /><circle cx="55" cy="59" r="3.500" /><circle cx="66" cy="59" r="3.500" /></g>
      </svg>
    ),
  },
];

const dockFiles: { name: string; icon: React.ReactNode }[] = [
  {
    name: "Documents stack", icon: (
      <svg width="84" height="88" viewBox="0 0 84 88">
        <path d="M19 3h28l23 28v50H19z" fill="#e7e7e7" stroke="#b9b9b9" strokeWidth=".6" /><path d="M16 7h30l24 26v51H16z" fill="#efefef" stroke="#c5c5c5" strokeWidth=".6" />
        <path d="M13 11h32q10 2 11 16 9 0 14 12v45H13z" fill="#fefefe" /><path d="M48 9q9 8 5 18 9-2 15 7Q64 18 48 9z" fill="#d9d9d9" />
        {Array.from({ length: 21 }, (_, i) => <path key={i} d={`M23 ${20 + i * 3}h${12 + ((i * 11) % 18)}`} stroke="#999" strokeWidth=".8" />)}
        <text x="42" y="80" fontSize="11" fontFamily="Inter" textAnchor="middle" fill="#777">DOC</text>
      </svg>
    ),
  },
  {
    name: "Folder", icon: (
      <svg width="84" height="88" viewBox="0 0 84 88">
        <path d="M5 20q0-5 4-5h18q3 0 5 3l2 2h37q3 0 3 4v10H5z" fill="#86d2f6" />
        <path d="M5 30h73v44q0 3-3 3H8q-3 0-3-3z" fill="#70cdf8" /><path d="M6 28h26l4-3h38q4 0 4 4v3H5z" fill="#94dbfb" /><path d="M5 71h73" stroke="#5ab7e0" />
      </svg>
    ),
  },
  {
    name: "Trash", icon: (
      <svg width="84" height="88" viewBox="0 0 84 88">
        <defs><linearGradient id="ts" x1="0" y1="0" x2="1" y2="0"><stop offset="0" stopColor="#c8c9cc" /><stop offset=".3" stopColor="#e5e5e6" /><stop offset=".75" stopColor="#dadadb" /><stop offset="1" stopColor="#bcbdc1" /></linearGradient></defs>
        <path d="M12 14q30-12 60 0-4 8-30 7-26 0-30-7z" fill="#c9ced6" />
        <path d="M16 14l12-9 8 7 6-8 11 9 10-7 5 8-12 6H23z" fill="#f4f4f4" /><path d="M24 17l8-8 7 5-5 7zM45 19l4-12 12 9-5 5z" fill="#5c4a42" /><path d="M31 10l8-1-2 5z" fill="#22b6d5" /><path d="M38 19l8-9 2 9z" fill="#2e3034" /><path d="M50 15l6-3 2 6z" fill="#376fb4" />
        <path d="M11 13q6 6 31 6t31-6l-8 62q-5 8-23 8t-23-8z" fill="url(#ts)" opacity=".97" />
        <path d="M34 32q14 3 22-8" fill="none" stroke="#f7f7f7" strokeWidth="3" opacity=".6" />
        <path d="M19 75q23 8 46 0-5 8-23 8t-23-8z" fill="#f3f3f4" />
      </svg>
    ),
  },
];

function DockItem({ name, running, icon }: { name: string; running?: boolean; icon: React.ReactNode }) {
  return (
    <button aria-label={name} className="flex min-w-0 flex-1 flex-col items-center">
      {icon}
      <span className={running ? "mt-1 size-[5px] rounded-full bg-[#07084a]" : "mt-1 size-[5px]"} />
    </button>
  );
}

function Dock() {
  return (
    <footer className="flex h-[106px] shrink-0 items-start pr-[90px]">
      <a href="#" aria-label="BARR document" className="ml-[5px] mr-[25px] mt-[11px] flex h-[83px] w-[60px] flex-col gap-[2px] bg-linear-to-b from-[#d0d0d2] to-white to-40% px-[6px] pt-1.5 text-[6px] leading-[7px] text-[#333] shadow">
        <b>BARR</b>
        <svg width="46" height="60" viewBox="0 0 46 60">
          <path d="M0 1h16M0 4h24M0 12h26" stroke="#999" strokeWidth=".8" />
          {Array.from({ length: 20 }, (_, i) => <path key={i} d={`M0 ${15 + i * 2.2}h${i % 7 === 6 ? 20 : 40 + (i % 3)}`} stroke="#999" strokeWidth=".8" />)}
        </svg>
      </a>
      <div className="flex h-full flex-1 rounded-t-md bg-linear-to-b from-[#6380ad] to-[#6a92d0] px-1 pt-2">
        {dockApps.map((a) => <DockItem key={a.name} {...a} />)}
        <div className="mx-[19px] mt-[5px] h-[79px] w-px bg-[#3e5c8e]" />
        {dockFiles.map((a) => <DockItem key={a.name} {...a} />)}
      </div>
    </footer>
  );
}

/* ---------- windows behind ---------- */

function BackWindows() {
  return (
    <>
      <div className="absolute bottom-0 left-px top-px w-40 overflow-hidden rounded-lg bg-linear-to-r from-[#d2d2d2] to-[#b2b2b2] to-12%">
        <div className="h-24 bg-[#e0e0e0]/50" />
        <div className="flex h-[26px] items-center border-y border-[#a5a5a5] bg-[#c0c0c0]">
          <span className="ml-[7px] h-4 w-5 rounded-sm border border-[#5e87a3] bg-[#9cc5e0]" />
        </div>
        <div className="mt-[111px] h-[25px] bg-[#a0a0a0]" />
      </div>
      <div className="absolute bottom-8 right-0 top-px w-60 overflow-hidden rounded-r-lg bg-white">
        <div className="flex h-[97px] flex-col justify-end border-b border-[#bcbcbc] bg-[#f3f3f3]">
          <span className="mb-2 mr-[10px] h-7 rounded-md border border-[#dedede]" />
          <span className="h-[29px] border-t border-[#dddddd]" />
        </div>
        <div className="ml-[174px] mt-7 size-[30px] rounded-full bg-[#6b7080]" />
        <div className="mr-9 mt-[58px] h-px bg-[#e2e2e2]" />
      </div>
    </>
  );
}

export default function App() {
  return (
    <div className="flex min-h-screen flex-col overflow-hidden bg-linear-to-b from-[#12305f] via-[#2d4c80] to-[#466a9d] font-['Inter',sans-serif] text-black">
      <MenuBar />
      <main className="relative flex flex-1 flex-col pl-[15px] pr-[41px] pt-px">
        <BackWindows />
        <section className="relative z-10 flex flex-1 flex-col overflow-hidden rounded-lg shadow-[0_8px_34px_rgba(0,0,0,0.6)]">
          <TabStrip />
          <Toolbar />
          <BookmarksBar />
          <Page />
          <DownloadsBar />
        </section>
      </main>
      <Dock />
    </div>
  );
}
